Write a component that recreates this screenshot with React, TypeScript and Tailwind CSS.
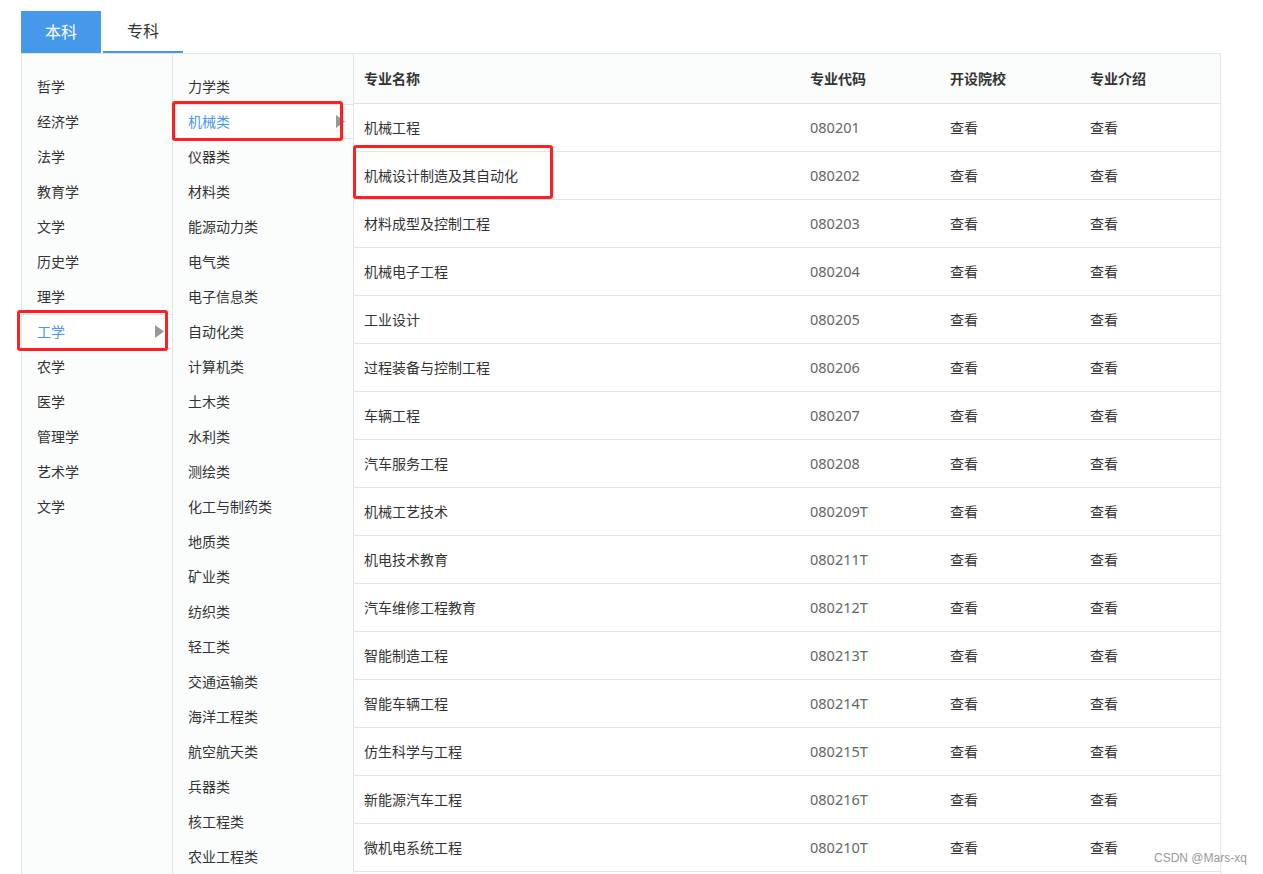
import React from "react";

const cats1 = ["哲学", "经济学", "法学", "教育学", "文学", "历史学", "理学", "工学", "农学", "医学", "管理学", "艺术学", "文学"];
const cats2 = ["力学类", "机械类", "仪器类", "材料类", "能源动力类", "电气类", "电子信息类", "自动化类", "计算机类", "土木类", "水利类", "测绘类", "化工与制药类", "地质类", "矿业类", "纺织类", "轻工类", "交通运输类", "海洋工程类", "航空航天类", "兵器类", "核工程类", "农业工程类"];
const rows: [string, string][] = [
  ["机械工程", "080201"],
  ["机械设计制造及其自动化", "080202"],
  ["材料成型及控制工程", "080203"],
  ["机械电子工程", "080204"],
  ["工业设计", "080205"],
  ["过程装备与控制工程", "080206"],
  ["车辆工程", "080207"],
  ["汽车服务工程", "080208"],
  ["机械工艺技术", "080209T"],
  ["机电技术教育", "080211T"],
  ["汽车维修工程教育", "080212T"],
  ["智能制造工程", "080213T"],
  ["智能车辆工程", "080214T"],
  ["仿生科学与工程", "080215T"],
  ["新能源汽车工程", "080216T"],
  ["微机电系统工程", "080210T"],
];

function Tri() {
  return (
    <svg width="9" height="13" viewBox="0 0 9 13">
      <path d="M0 0 L9 6.5 L0 13 Z" fill="#999" />
    </svg>
  );
}

export default function App() {
  return (
    <div
      className="relative h-[874px] w-[1263px] overflow-hidden bg-white text-[14px] text-[#333]"
      style={{ fontFamily: '"Noto Sans", "Noto Sans CJK SC", sans-serif' }}
    >
      <div className="pl-[21px] pt-[11px]">
        <div className="flex h-[42px] gap-[2px]">
          <div className="flex w-[80px] items-center justify-center bg-[#4699ea] text-[16px] text-white">本科</div>
          <div className="flex w-[80px] items-center justify-center border-b-2 border-[#4699ea] text-[16px] text-[#333]">专科</div>
        </div>
        <div className="flex w-[1200px] border-l border-t border-r border-[#e4e4e4]">
          <div className="w-[151px] shrink-0 border-r border-[#e4e4e4] bg-[#fbfdfd] pt-[15px]">
            {cats1.map((c, i) =>
              i === 7 ? (
                <div key={i} className="relative flex h-[35px] items-center border-y border-[#e4e4e4] bg-white pl-[15px] text-[#4699ea]">
                  {c}
                  <span className="absolute right-[8px] top-0 flex h-full items-center"><Tri /></span>
                </div>
              ) : (
                <div key={i} className="flex h-[35px] items-center pl-[15px]">{c}</div>
              )
            )}
          </div>
          <div className="w-[181px] shrink-0 border-r border-[#e4e4e4] bg-[#fbfdfd] pt-[15px]">
            {cats2.map((c, i) =>
              i === 1 ? (
                <div key={i} className="relative flex h-[35px] items-center border-y border-[#e4e4e4] bg-white pl-[15px] text-[#4699ea]">
                  {c}
                  <span className="absolute right-[8px] top-0 flex h-full items-center"><Tri /></span>
                </div>
              ) : (
                <div key={i} className="flex h-[35px] items-center pl-[15px]">{c}</div>
              )
            )}
          </div>
          <div className="flex-1">
            <div className="flex h-[50px] items-center border-b border-[#e4e4e4] bg-[#fbfdfd] font-bold">
              <div className="w-[446px] pl-[10px]">专业名称</div>
              <div className="w-[140px] pl-[10px]">专业代码</div>
              <div className="w-[140px] pl-[10px]">开设院校</div>
              <div className="flex-1 pl-[10px]">专业介绍</div>
            </div>
            {rows.map(([n, c], i) => (
              <div key={i} className="flex h-[48px] items-center border-b border-[#e4e4e4]">
                <div className="w-[446px] pl-[10px]">{n}</div>
                <div className="w-[140px] pl-[10px] text-[14.5px] text-[#666]">{c}</div>
                <div className="w-[140px] pl-[10px]">查看</div>
                <div className="flex-1 pl-[10px]">查看</div>
              </div>
            ))}
          </div>
        </div>
      </div>

      {/* annotation boxes */}
      <div className="pointer-events-none absolute left-[17px] top-[310px] h-[41px] w-[151px] rounded-[3px] border-[3px] border-[#fe1f1f]" />
      <div className="pointer-events-none absolute left-[172px] top-[101px] h-[40px] w-[171px] rounded-[3px] border-[3px] border-[#fe1f1f]" />
      <div className="pointer-events-none absolute left-[353px] top-[145px] h-[54px] w-[200px] rounded-[3px] border-[3px] border-[#fe1f1f]" />

      <div className="absolute left-[1154px] top-[849px] text-[12px] text-[#999]" style={{ fontFamily: '"Liberation Sans", sans-serif' }}>CSDN @Mars-xq</div>
    </div>
  );
}
